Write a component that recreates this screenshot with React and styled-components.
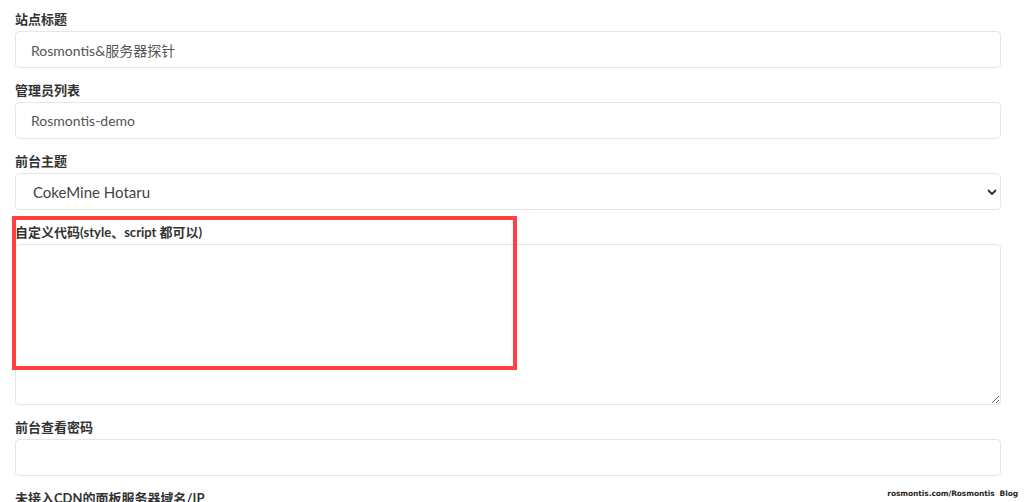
import React from "react";
import styled, { createGlobalStyle } from "styled-components";

const GlobalStyle = createGlobalStyle`
  html, body {
    margin: 0;
    padding: 0;
    background: #fff;
  }
  body {
    font-family: Lato, "Noto Sans CJK SC", sans-serif;
    color: #333;
  }
`;

const fields = [
  { label: "站点标题", type: "input", value: "Rosmontis&服务器探针" },
  { label: "管理员列表", type: "input", value: "Rosmontis-demo" },
  { label: "前台主题", type: "select", value: "CokeMine Hotaru" },
  { label: "自定义代码(style、script 都可以)", type: "textarea", value: "" },
  { label: "前台查看密码", type: "input", value: "" },
  { label: "未接入CDN的面板服务器域名/IP", type: "input", value: "" },
];

const App = () => {
  return (
    <Page>
      <GlobalStyle />
      <Form>
        {fields.map((f, i) => (
          <Group key={i}>
            <Label>{f.label}</Label>
            {f.type === "input" && <Input defaultValue={f.value} />}
            {f.type === "select" && (
              <SelectWrap>
                <Select defaultValue={f.value}>
                  <option>{f.value}</option>
                </Select>
                <Chevron width="12" height="12" viewBox="0 0 12 12">
                  <path d="M2.5 4.5 L6 8 L9.5 4.5" fill="none" stroke="#333" strokeWidth="1.8" strokeLinecap="round" strokeLinejoin="round" />
                </Chevron>
              </SelectWrap>
            )}
            {f.type === "textarea" && <TextArea defaultValue={f.value} />}
          </Group>
        ))}
      </Form>
      <Highlight />
      <Watermark>rosmontis.com/Rosmontis&nbsp;&nbsp;Blog</Watermark>
    </Page>
  );
};

const Page = styled.div`
  position: relative;
  width: 1024px;
  height: 502px;
  overflow: hidden;
`;

const Form = styled.div`
  display: flex;
  flex-direction: column;
  gap: 12px;
  padding: 9px 23px 0 15px;
`;

const Group = styled.div`
  display: flex;
  flex-direction: column;
  gap: 2px;
`;

const Label = styled.label`
  font-size: 13px;
  font-weight: 700;
  line-height: 20px;
  color: #333;
`;

const fieldBase = `
  box-sizing: border-box;
  width: 100%;
  border: 1px solid #e6e6e6;
  border-radius: 4px;
  background: #fff;
  color: #555;
  font-family: Lato, "Noto Sans CJK SC", sans-serif;
  outline: none;
`;

const Input = styled.input`
  ${fieldBase}
  display: block;
  height: 37px;
  padding: 0 15px;
  font-size: 14px;
`;

const SelectWrap = styled.div`
  position: relative;
`;

const Select = styled.select`
  ${fieldBase}
  display: block;
  height: 37px;
  padding: 0 15px 0 17px;
  font-size: 15px;
  color: #444;
  appearance: none;
`;

const Chevron = styled.svg`
  position: absolute;
  right: 3px;
  top: 13px;
  pointer-events: none;
`;

const TextArea = styled.textarea`
  ${fieldBase}
  display: block;
  height: 161px;
  padding: 8px 15px;
  font-size: 14px;
  resize: both;
`;

const Highlight = styled.div`
  position: absolute;
  left: 12px;
  top: 216px;
  width: 505px;
  height: 154px;
  box-sizing: border-box;
  border: 4px solid #ff4141;
  pointer-events: none;
`;

const Watermark = styled.div`
  position: absolute;
  right: 6px;
  bottom: 4px;
  font-family: "DejaVu Sans", sans-serif;
  font-size: 7.5px;
  font-weight: 700;
  color: #2a1f22;
  letter-spacing: -0.1px;
`;

export default App;
